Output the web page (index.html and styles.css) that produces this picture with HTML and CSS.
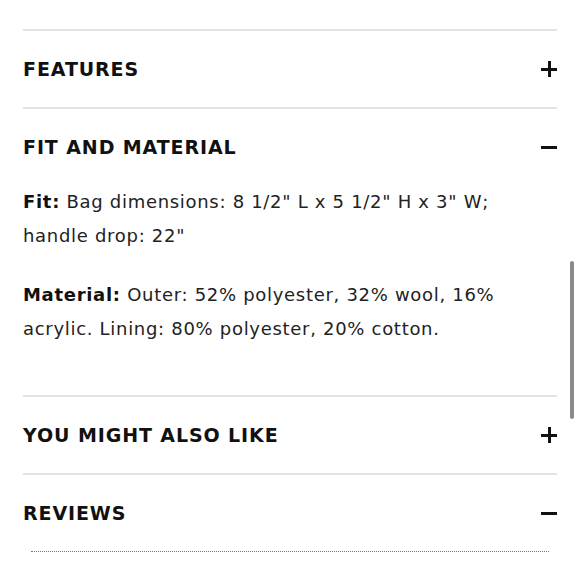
FILE: index.html
```html
<!DOCTYPE html>
<html lang="en">
<head>
<meta charset="utf-8">
<link rel="stylesheet" href="styles.css">
</head>
<body>
<div class="page">
  <section class="acc">
    <div class="acc-head">
      <h2 class="acc-title">FEATURES</h2>
      <span class="icon plus"></span>
    </div>
  </section>
  <section class="acc">
    <div class="acc-head">
      <h2 class="acc-title">FIT AND MATERIAL</h2>
      <span class="icon minus"></span>
    </div>
    <div class="acc-body">
      <p><b>Fit:</b> Bag dimensions: 8 1/2" L x 5 1/2" H x 3" W; handle drop: 22"</p>
      <p><b>Material:</b> Outer: 52% polyester, 32% wool, 16% acrylic. Lining: 80% polyester, 20% cotton.</p>
    </div>
  </section>
  <section class="acc">
    <div class="acc-head">
      <h2 class="acc-title">YOU MIGHT ALSO LIKE</h2>
      <span class="icon plus"></span>
    </div>
  </section>
  <section class="acc">
    <div class="acc-head">
      <h2 class="acc-title">REVIEWS</h2>
      <span class="icon minus"></span>
    </div>
    <div class="dots"></div>
  </section>
</div>
<div class="scrollbar"></div>
</body>
</html>
```
FILE: styles.css
```css
html, body {
  margin: 0;
  padding: 0;
  background: #fff;
}
body {
  font-family: "DejaVu Sans", "Open Sans", sans-serif;
  color: #222;
  overflow: hidden;
  height: 580px;
}
.page {
  padding: 29px 23px 0 23px;
}
.acc {
  border-top: 2px solid #e2e2e2;
}
.acc-head {
  height: 76px;
  display: flex;
  align-items: center;
  justify-content: space-between;
}
.acc-title {
  margin: 0;
  font-size: 19px;
  font-weight: 700;
  letter-spacing: 0.9px;
  color: #111;
}
.icon {
  position: relative;
  width: 16px;
  height: 16px;
  flex: none;
}
.icon::before,
.icon::after {
  content: "";
  position: absolute;
  background: #111;
}
.icon::before {
  left: 0;
  right: 0;
  top: 6.5px;
  height: 3px;
}
.plus::after {
  top: 0;
  bottom: 0;
  left: 6.5px;
  width: 3px;
}
.minus::after {
  display: none;
}
.acc-body {
  padding: 0 0 49px 0;
  font-size: 18px;
  line-height: 34px;
  letter-spacing: 0.7px;
  color: #222;
}
.acc-body p {
  margin: 0 0 25px 0;
  max-width: 500px;
}
.acc-body p:last-child {
  margin-bottom: 0;
}
.acc-body b {
  font-weight: 700;
  color: #111;
}
.dots {
  margin: 0 8px 0 8px;
  border-top: 1px dotted #777;
  height: 0;
}
.scrollbar {
  position: absolute;
  left: 570px;
  top: 261px;
  width: 4px;
  height: 158px;
  border-radius: 2px;
  background: #8a8a8a;
}
```
